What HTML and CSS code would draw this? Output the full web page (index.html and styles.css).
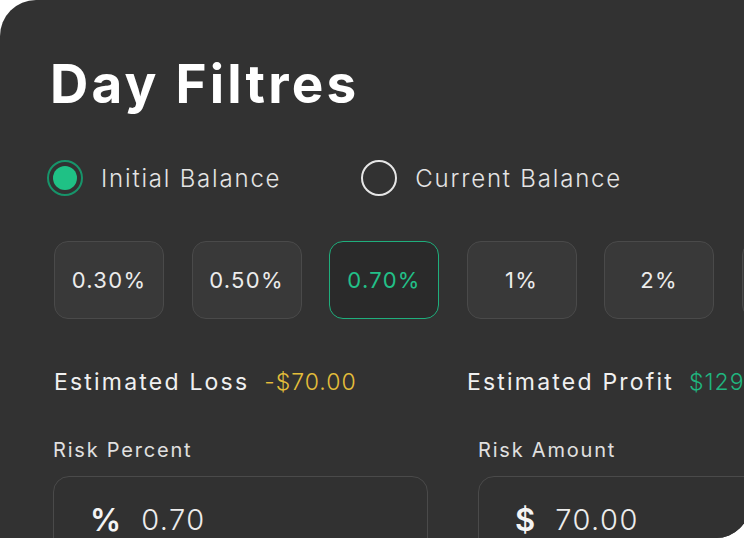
FILE: index.html
```html
<!DOCTYPE html>
<html>
<head>
<meta charset="utf-8">
<link rel="stylesheet" href="styles.css">
</head>
<body>
<div class="card">
  <h1 class="title">Day Filtres</h1>
  <div class="radios">
    <label class="radio checked"><span class="dot"></span><span class="rlabel">Initial Balance</span></label>
    <label class="radio"><span class="dot"></span><span class="rlabel">Current Balance</span></label>
  </div>
  <div class="chips">
    <div class="chip">0.30%</div>
    <div class="chip">0.50%</div>
    <div class="chip active">0.70%</div>
    <div class="chip">1%</div>
    <div class="chip">2%</div>
    <div class="chip">3%</div>
  </div>
  <div class="estimates">
    <div class="est est-loss"><span class="est-label">Estimated Loss</span><span class="loss">-$70.00</span></div>
    <div class="est"><span class="est-label">Estimated Profit</span><span class="profit">$129.50</span></div>
  </div>
  <div class="fields">
    <div class="field">
      <div class="flabel">Risk Percent</div>
      <div class="input"><span class="sym">%</span><span class="val">0.70</span></div>
    </div>
    <div class="field">
      <div class="flabel">Risk Amount</div>
      <div class="input"><span class="sym">$</span><span class="val">70.00</span></div>
    </div>
  </div>
</div>
</body>
</html>
```

FILE: styles.css
```css
html, body {
  margin: 0;
  padding: 0;
  background: #ffffff;
  overflow: hidden;
}
body {
  width: 744px;
  height: 538px;
  font-family: "Inter", "Noto Sans", sans-serif;
}
.card {
  width: 750px;
  height: 538px;
  box-sizing: border-box;
  background: #323232;
  border-radius: 36px 0 34px 0;
  overflow: hidden;
  padding: 54px 0 0 54px;
  color: #e8e8e8;
}
.title {
  margin: 0 0 0 -4px;
  font-size: 53px;
  line-height: 60px;
  font-weight: 700;
  color: #ffffff;
  letter-spacing: 3.2px;
}
.radios {
  display: flex;
  gap: 80px;
  margin-top: 46px;
  margin-left: -7px;
  height: 36px;
  align-items: center;
}
.radio {
  display: flex;
  align-items: center;
  gap: 18px;
}
.dot {
  width: 36px;
  height: 36px;
  box-sizing: border-box;
  border: 2px solid #e6e6e6;
  border-radius: 50%;
  display: flex;
  align-items: center;
  justify-content: center;
}
.radio.checked .dot {
  border-color: #17946a;
}
.radio.checked .dot::after {
  content: "";
  width: 24px;
  height: 24px;
  border-radius: 50%;
  background: #1fc185;
}
.rlabel {
  font-size: 24px;
  font-weight: 300;
  color: #e4e4e4;
  letter-spacing: 1.8px;
}
.chips {
  display: flex;
  gap: 27.5px;
  margin-top: 45px;
}
.chip {
  flex: 0 0 auto;
  width: 110px;
  height: 78px;
  box-sizing: border-box;
  border: 1px solid #4a4a4a;
  border-radius: 14px;
  background: #393939;
  display: flex;
  align-items: center;
  justify-content: center;
  font-size: 22px;
  letter-spacing: 1.3px;
  color: #ececec;
}
.chip.active {
  background: #2a2a2a;
  border: 1.5px solid #1fae7c;
  color: #22c088;
}
.estimates {
  display: flex;
  margin-top: 49px;
}
.est {
  flex: 0 0 auto;
  display: flex;
  gap: 15px;
  font-size: 23px;
  letter-spacing: 2.2px;
  white-space: nowrap;
}
.est-loss {
  flex: 0 0 413px;
}
.est-label {
  color: #f0f0f0;
}
.loss {
  color: #e4be3a;
  font-weight: 300;
  letter-spacing: 1px;
}
.profit {
  color: #20b57f;
  font-weight: 300;
  letter-spacing: 1px;
}
.fields {
  display: flex;
  gap: 50px;
  margin-top: 41px;
  margin-left: -1px;
}
.field {
  flex: 0 0 auto;
  width: 375px;
}
.flabel {
  font-size: 20px;
  letter-spacing: 1.8px;
  color: #e0e0e0;
  height: 26px;
  line-height: 26px;
}
.input {
  margin-top: 13px;
  height: 90px;
  box-sizing: border-box;
  border: 1.5px solid #4a4a4a;
  border-radius: 16px;
  background: #313131;
  display: flex;
  align-items: center;
  padding: 0 0 4px 36px;
  gap: 20px;
}
.sym {
  font-size: 31px;
  font-weight: 600;
  color: #f4f4f4;
}
.val {
  font-size: 29px;
  font-weight: 300;
  letter-spacing: 1.5px;
  color: #ececec;
}
```
